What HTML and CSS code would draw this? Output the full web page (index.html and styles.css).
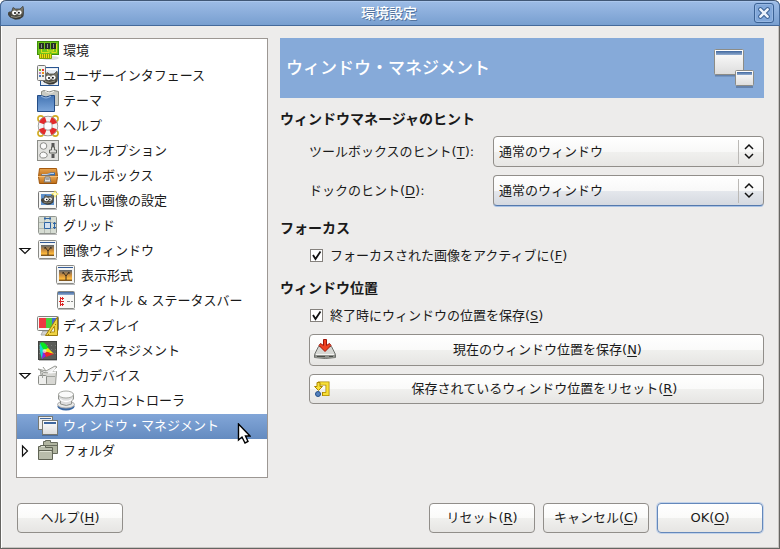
FILE: index.html
```html
<!DOCTYPE html>
<html lang="ja">
<head>
<meta charset="utf-8">
<meta name="viewport" content="width=device-width, initial-scale=1">
<title>環境設定</title>
<link rel="stylesheet" href="styles.css">
</head>
<body>
<svg class="defs" aria-hidden="true">
  <defs>
    <linearGradient id="paper" x1="0" y1="0" x2="0" y2="1"><stop offset="0" stop-color="#fff"/><stop offset="1" stop-color="#dcdcdc"/></linearGradient>
    <linearGradient id="blue" x1="0" y1="0" x2="0" y2="1"><stop offset="0" stop-color="#4475b4"/><stop offset="1" stop-color="#7ca6da"/></linearGradient>
    <linearGradient id="bar" x1="0" y1="0" x2="0" y2="1"><stop offset="0" stop-color="#3e669e"/><stop offset="1" stop-color="#93add0"/></linearGradient>
    <linearGradient id="dusk" x1="0" y1="0" x2="0" y2="1"><stop offset="0" stop-color="#5d666f"/><stop offset=".45" stop-color="#c98b3e"/><stop offset=".8" stop-color="#fdb93c"/><stop offset="1" stop-color="#5d3b17"/></linearGradient>
    <linearGradient id="wood" x1="0" y1="0" x2="0" y2="1"><stop offset="0" stop-color="#e8a552"/><stop offset="1" stop-color="#bd6c15"/></linearGradient>
    <linearGradient id="fur" x1="0" y1="0" x2="0" y2="1"><stop offset="0" stop-color="#8c8878"/><stop offset="1" stop-color="#35342f"/></linearGradient>
    <symbol id="wilber" viewBox="0 0 16 14">
      <path d="M4 4.500 5 1.500 7.500 3 12 3 15 .3 15.800 5 15 10.500Q12 13.700 7 13.200L2 11 0 8 1 6 3 6Z" fill="url(#fur)" stroke="#34332f" stroke-width=".7"/>
      <ellipse cx="6.500" cy="6.800" rx="2.500" ry="2.400" fill="#fff"/><ellipse cx="11.300" cy="6.500" rx="2.300" ry="2.200" fill="#fff"/>
      <circle cx="7" cy="7" r="1" fill="#111"/><circle cx="10.900" cy="6.800" r="1" fill="#111"/>
      <ellipse cx="1.800" cy="8" rx="1.600" ry="1.800" fill="#45433e"/><path d="M3 10.500q5 2 10-.5" fill="none" stroke="#b8b4a0" stroke-width=".7"/>
    </symbol>
    <symbol id="picture" viewBox="0 0 22 22">
      <path d="M2 19.500h18" stroke="#bbb"/><rect x="1.500" y=".5" width="18" height="18" rx="1" fill="#f5f5f3" stroke="#8a8a86"/>
      <rect x="3" y="2" width="15" height="1" fill="#345b96"/><rect x="4" y="5" width="13" height="11" fill="url(#dusk)"/>
      <path d="M11 15v-4L8 7M11 11l3-4M9 8H7M13 8h2" fill="none" stroke="#3a2f20"/>
    </symbol>
  </defs>
</svg>
<div class="window">
  <header class="titlebar">
    <svg class="app-icon" viewBox="0 0 16 14" aria-hidden="true"><use href="#wilber"/></svg>
    <h1 class="title">環境設定</h1>
    <button class="close" type="button" aria-label="閉じる"><svg viewBox="0 0 20 20" aria-hidden="true"><path d="m6 6 8 8M14 6l-8 8" stroke="#3c6294" stroke-width="5" stroke-linecap="round"/><path d="m6 6 8 8M14 6l-8 8" stroke="#eef4fc" stroke-width="2.800" stroke-linecap="round"/></svg></button>
  </header>

  <main class="content">
    <ul class="tree" role="tree" aria-label="カテゴリ">
      <li class="row" role="treeitem">
        <svg class="icon" viewBox="0 0 22 22"><ellipse cx="13" cy="18" rx="9" ry="2" fill="#ddd"/><rect x=".5" y="1.500" width="21" height="13" fill="#70c51b" stroke="#3f9009"/><path d="M2.500 14v4.500h12V14" fill="#e8e40c" stroke="#7ba10a"/><path d="M4.500 14v4m2-4v4m2-4v4m2-4v4m2-4v4" stroke="#97930b"/><path d="M4.500 9v3.500h8M10.500 9v2h6V9m3-5v8.500h-5" fill="none" stroke="#dfe118"/><path d="M2 3h5v6H2zM8 3h5v6H8zM14 3h5v6h-5z" fill="#263122"/><path d="M4 4h1v4H4zm6 0h1v4h-1zm6 0h1v4h-1z" fill="#8d8b8e"/></svg>
        <span>環境</span></li>
      <li class="row" role="treeitem">
        <svg class="icon" viewBox="0 0 22 22"><rect x="3.500" y="2.500" width="18" height="18" fill="#e8edf3" stroke="#285591"/><path d="M5 4h15v1H5z" fill="#fff"/><use href="#wilber" x="5" y="6" width="16" height="14"/><rect x=".5" y=".5" width="8" height="15" rx="1" fill="#f2f2f0" stroke="#777"/><path d="M2 4h2v2H2z" fill="#73b91d"/><path d="M5 4h2v2H5z" fill="#e33"/><path d="M2 7h2v2H2z" fill="#bc86bd"/><path d="M5 7h2v2H5z" fill="#ef921c"/><path d="M2 10h2v2H2z" fill="#4a78bd"/><path d="M5 10h2v2H5z" fill="#7a7a70"/></svg>
        <span>ユーザーインタフェース</span></li>
      <li class="row" role="treeitem">
        <svg class="icon" viewBox="0 0 22 22"><path d="M4.500 1.500 7 .5q5 3 10 0l4.500 1v14h-17z" fill="#c9cbc4" stroke="#8a8d84"/><path d="M8 1q5 4 9 0" fill="none" stroke="#f5f5f1"/><path d="M.5 5.500H4q5 3 10 0h3.500v16H.5z" fill="url(#blue)" stroke="#244d86"/><path d="M4 6q5 4 10 0" fill="none" stroke="#9bbbe3"/></svg>
        <span>テーマ</span></li>
      <li class="row" role="treeitem">
        <svg class="icon" viewBox="0 0 22 22"><g fill="none" stroke="#d2ac22" stroke-width="1.600"><circle cx="3.700" cy="3.700" r="2.800"/><circle cx="18.300" cy="3.700" r="2.800"/><circle cx="3.700" cy="18.300" r="2.800"/><circle cx="18.300" cy="18.300" r="2.800"/></g><circle cx="11" cy="11" r="7" fill="none" stroke="#8b8b87" stroke-width="6.500"/><circle cx="11" cy="11" r="7" fill="none" stroke="#f5f5f5" stroke-width="5"/><circle cx="11" cy="11" r="7" fill="none" stroke="#e22c2c" stroke-width="5" stroke-dasharray="6 5" stroke-dashoffset="-2.500"/></svg>
        <span>ヘルプ</span></li>
      <li class="row" role="treeitem">
        <svg class="icon" viewBox="0 0 22 22"><rect x=".5" y=".5" width="21" height="20" fill="#e2e2df" stroke="#8b8d88"/><circle cx="6.500" cy="6" r="3.300" fill="#fafafa" stroke="#8b8b88"/><path d="M3 14q3-4 7 0 1 4-4 4-4 0-3-4Z" fill="#fafafa" stroke="#8b8b88"/><path d="M14.500 3h3v4h-3zM14.500 14h3v4h-3z" fill="#555"/><path d="M14.500 7h3v3h2v3h-7v-3h2z" fill="#dededb" stroke="#62645f"/></svg>
        <span>ツールオプション</span></li>
      <li class="row" role="treeitem">
        <svg class="icon" viewBox="0 0 22 22"><path d="M2.500 3.500h17l1 8h-19z" fill="url(#wood)" stroke="#a55a0e"/><path d="M4 10.500q0-2 3-1l5-1 1-1h5v3z" fill="#3771b7"/><path d="M5 9.500h5l4-1h3" fill="none" stroke="#b9cde5"/><path d="M1.500 11.500h19l-1 7h-17z" fill="url(#wood)" stroke="#9c540b"/><path d="M1 11.500h20" stroke="#f7c077"/><path d="M8 14v-2h5v2l1 3H7z" fill="#e5e5e2" stroke="#777"/><path d="M9 14h3" stroke="#666"/></svg>
        <span>ツールボックス</span></li>
      <li class="row" role="treeitem">
        <svg class="icon" viewBox="0 0 22 22"><path d="M2 19.500h18" stroke="#bbb"/><rect x="1.500" y="1.500" width="18" height="17" rx="1" fill="#f7f7f5" stroke="#777"/><path d="M4 4h13v11H4z" fill="#5e91cc"/><use href="#wilber" x="4" y="4" width="13" height="11"/><path d="m18 0 1.200 2.700L22 4l-2.800 1.200L18 8l-1.200-2.800L14 4l2.800-1.300z" fill="#f5e13f"/><circle cx="18" cy="4" r="1.700" fill="#fffbd0"/></svg>
        <span>新しい画像の設定</span></li>
      <li class="row" role="treeitem">
        <svg class="icon" viewBox="0 0 22 22"><path d="M2 19.500h18" stroke="#bbb"/><rect x="1.500" y="1.500" width="18" height="17" rx="1" fill="#d7ddd4" stroke="#929690"/><path d="M7.500 2v16m6-16v16M2 7.500h17M2 13.500h17" stroke="#b2b8b0"/><path d="M7.500 7.500h6v6h-6z" fill="#d3e0ef" stroke="#2e65a5"/><path d="M7 3.500h7M17.500 7v7M8 2v3m5-3v3M16 8.500h3M16 12.500h3" stroke="#2e65a5"/></svg>
        <span>グリッド</span></li>
      <li class="row" role="treeitem" aria-expanded="true">
        <button class="expander" type="button" aria-label="画像ウィンドウを折りたたむ"><svg viewBox="0 0 16 16"><path d="M3 5.500h10L8 10.500z" fill="#fff" stroke="#111" stroke-width="1.200"/></svg></button>
        <svg class="icon"><use href="#picture"/></svg>
        <span>画像ウィンドウ</span></li>
      <li class="row child" role="treeitem" aria-level="2">
        <svg class="icon"><use href="#picture"/></svg>
        <span>表示形式</span></li>
      <li class="row child" role="treeitem" aria-level="2">
        <svg class="icon" viewBox="0 0 22 22"><path d="M3 19.500h17" stroke="#bbb"/><rect x="2.500" y="1.500" width="17" height="17" rx="1" fill="#f8f8f6" stroke="#858783"/><path d="M3 2h16v3H3z" fill="url(#bar)"/><path d="M5.500 7v9M5 8.500h4m-4 6h4M4 11.500h5M7.500 7v3m0 3v3" stroke="#d92424"/><path d="M12 11.500h3m1 0h2" stroke="#888"/></svg>
        <span>タイトル &amp; ステータスバー</span></li>
      <li class="row" role="treeitem">
        <svg class="icon" viewBox="0 0 22 22"><path d="M6 16h9l1 4H4z" fill="#d5d5d2" stroke="#aaa"/><rect x=".5" y="1.500" width="21" height="14" rx="1" fill="#f6f6f4" stroke="#81837f"/><path d="M2 3h7v10H2z" fill="#ed3942"/><path d="M9 3h6v10H9z" fill="#48d13d"/><path d="M15 3h5v10h-5z" fill="#436cd0"/><path d="M20.500 2v18.500h-12z" fill="#eed343" stroke="#9b7b0b"/><path d="M17.500 11v6h-4z" fill="#eaf0e3" stroke="#b49117"/><path d="m11 19 1 1m1-3 1 1m2-6 1 1m1-4 1 1" stroke="#9b7b0b"/></svg>
        <span>ディスプレイ</span></li>
      <li class="row" role="treeitem">
        <svg class="icon" viewBox="0 0 22 22"><path d="M2 20.500h18" stroke="#bbb"/><rect x="1.500" y="1.500" width="18" height="18" fill="#5b5d59" stroke="#414340"/><path d="M2 5.500h17M2 9.500h17M2 13.500h17" stroke="#7b7e78" stroke-dasharray="1 3"/><path d="M3 3q5-3 9 7L6 11z" fill="#08e821"/><path d="M3 3 7 11l-2 8Q2 11 3 3z" fill="#13d8cf"/><path d="m11 8 6 6-11-3z" fill="#f6e212"/><path d="m17 14-8 3-3-6z" fill="#f02628"/><path d="m9 16-4 3 1-8z" fill="#8a24e5"/><circle cx="7.500" cy="11" r="2" fill="#f4efed" opacity=".7"/></svg>
        <span>カラーマネジメント</span></li>
      <li class="row" role="treeitem" aria-expanded="true">
        <button class="expander" type="button" aria-label="入力デバイスを折りたたむ"><svg viewBox="0 0 16 16"><path d="M3 5.500h10L8 10.500z" fill="#fff" stroke="#111" stroke-width="1.200"/></svg></button>
        <svg class="icon" viewBox="0 0 22 22"><path d="M3.500 6.500h16l-1 13h-13z" fill="#d8d8d4" stroke="#979993"/><path d="m1 4 8 2 9-5 2 1-7 6q-6 1-12-4zM6 2l3 4" fill="#eee" stroke="#979993"/><path d="m13 8 5-5M11 8l8-1" stroke="#fafafa" stroke-width="1.500"/><rect x="1.500" y="10.500" width="8" height="9" rx="1" fill="#eeeeec" stroke="#8a8c87"/><path d="M5.500 13V8M10 11.500h8" stroke="#a1a39e"/></svg>
        <span>入力デバイス</span></li>
      <li class="row child" role="treeitem" aria-level="2">
        <svg class="icon" viewBox="0 0 22 22"><ellipse cx="11" cy="16.500" rx="8.500" ry="4" fill="#3766a4"/><ellipse cx="11" cy="14.500" rx="8.500" ry="3.500" fill="#e8e8e6" stroke="#aaa"/><path d="M3.500 4v5l2 2v3q6 3 11 0v-3l2-2V4z" fill="#ddd" stroke="#92948f"/><ellipse cx="11" cy="4.500" rx="7.500" ry="3.500" fill="#fafafa" stroke="#a7a9a4"/><path d="M5 9.500q6 4 12 0" fill="none" stroke="#fff" stroke-width="1.500"/></svg>
        <span>入力コントローラ</span></li>
      <li class="row selected" role="treeitem" aria-selected="true">
        <svg class="icon" viewBox="0 0 22 22"><path d="M5 20.500h16" stroke="#4b6c9c"/><rect x="1.500" y="1.500" width="14" height="13" fill="#eee" stroke="#777973"/><path d="M3 3.500h11" stroke="#3e669e"/><rect x="5.500" y="5.500" width="15" height="14" fill="url(#paper)" stroke="#777973"/><path d="M7 8h12" stroke="#3e669e" stroke-width="2"/></svg>
        <span>ウィンドウ・マネジメント</span>
        <svg class="pointer" viewBox="0 0 14 21" aria-hidden="true"><path d="M1.500 1v16l3.500-3 3 6 3-1.500-2.500-5.500H13z" fill="#fff" stroke="#000" stroke-width="1.400"/></svg></li>
      <li class="row" role="treeitem" aria-expanded="false">
        <button class="expander" type="button" aria-label="フォルダを展開"><svg viewBox="0 0 16 16"><path d="M5.500 3v10l5-5z" fill="#fff" stroke="#111" stroke-width="1.200"/></svg></button>
        <svg class="icon" viewBox="0 0 22 22"><path d="M6.500 13.500v-12h2v-1h5v2h7v11z" fill="#b1b5a0" stroke="#696d5e"/><path d="M7 5.500h13" stroke="#696d5e"/><path d="M1.500 19.500v-13h2v-1h5v2h7v12z" fill="#b9bdab" stroke="#606455"/><path d="M2 10.500h13" stroke="#606455"/><path d="M3 11.500h11M4 6.500h4" stroke="#dfe2d3"/></svg>
        <span>フォルダ</span></li>
    </ul>

    <section class="panel">
      <div class="banner">
        <h2>ウィンドウ・マネジメント</h2>
        <svg viewBox="0 0 42 40" aria-hidden="true"><path d="M1 27.500h29M22 39h17" stroke="#6482ac" stroke-width="2"/><rect x=".5" y="1.500" width="29" height="25" rx="1" fill="url(#paper)" stroke="#8c8c87"/><rect x="2" y="3" width="26" height="4" fill="url(#bar)"/><rect x="21.500" y="22.500" width="18" height="15" rx="1" fill="url(#paper)" stroke="#8c8c87"/><rect x="23" y="24" width="15" height="3" fill="url(#bar)"/></svg>
      </div>

      <div class="group">
        <h3>ウィンドウマネージャのヒント</h3>
        <div class="field">
          <label for="toolbox-hint">ツールボックスのヒント(<u>T</u>):</label>
          <span class="combo"><select id="toolbox-hint"><option>通常のウィンドウ</option></select><svg viewBox="0 0 24 31" aria-hidden="true"><path d="M.5 4v24" stroke="#bbb9b6"/><path d="m7 13 4-4 4 4M7 18l4 4 4-4" fill="none" stroke="#111" stroke-width="1.500"/></svg></span>
        </div>
        <div class="field">
          <label for="dock-hint">ドックのヒント(<u>D</u>):</label>
          <span class="combo hover"><select id="dock-hint"><option>通常のウィンドウ</option></select><svg viewBox="0 0 24 31" aria-hidden="true"><path d="M.5 4v24" stroke="#bbb9b6"/><path d="m7 13 4-4 4 4M7 18l4 4 4-4" fill="none" stroke="#111" stroke-width="1.500"/></svg></span>
        </div>
      </div>

      <div class="group">
        <h3>フォーカス</h3>
        <label class="check"><span class="tick"><input type="checkbox" checked><svg viewBox="0 0 13 13" aria-hidden="true"><path d="m3 6 2.500 4L10.500 2.500" fill="none" stroke="#111" stroke-width="1.800"/></svg></span><span>フォーカスされた画像をアクティブに(<u>F</u>)</span></label>
      </div>

      <div class="group">
        <h3>ウィンドウ位置</h3>
        <label class="check"><span class="tick"><input type="checkbox" checked><svg viewBox="0 0 13 13" aria-hidden="true"><path d="m3 6 2.500 4L10.500 2.500" fill="none" stroke="#111" stroke-width="1.800"/></svg></span><span>終了時にウィンドウの位置を保存(<u>S</u>)</span></label>
        <button class="button wide tall" type="button"><svg class="icon" viewBox="0 0 22 22"><path d="M4.500 7.500h13l4 8v3q-10 2-21 0v-3z" fill="#d6d7d3" stroke="#6d6f6a"/><path d="M1 15.500h20v3q-10 1-20 0z" fill="#8f918c"/><path d="M2 15.500h18" stroke="#f3f3f1"/><path d="M3 17.500h8m4 0h4" stroke="#4a4d47"/><path d="M9.500 .5h3v6l3-2 1.500 2-6 6-6-6L6.500 4.500l3 2z" fill="#ef4221" stroke="#9d1509"/></svg><span>現在のウィンドウ位置を保存(<u>N</u>)</span></button>
        <button class="button wide" type="button"><svg class="icon small" viewBox="0 0 16 16"><path d="M4 2.500h9.500v10.500H8" fill="none" stroke="#ad8800" stroke-width="4"/><path d="M4 2.500h9.500v10.500H9" fill="none" stroke="#f8df38" stroke-width="2.400"/><path d="M3 1.500h3v4h2.500L4.500 9.500 .5 5.500H3z" fill="#f8df38" stroke="#ad8800"/><circle cx="4" cy="13" r="2.500" fill="#5482be" stroke="#254f88"/></svg><span>保存されているウィンドウ位置をリセット(<u>R</u>)</span></button>
      </div>
    </section>
  </main>

  <footer class="actions">
    <button class="button help" type="button">ヘルプ(<u>H</u>)</button>
    <button class="button" type="button">リセット(<u>R</u>)</button>
    <button class="button" type="button">キャンセル(<u>C</u>)</button>
    <button class="button default" type="button">OK(<u>O</u>)</button>
  </footer>
</div>
</body>
</html>
```
FILE: styles.css
```css
* { box-sizing: border-box; }

body {
  margin: 0;
  background: #fff;
  color: #1a1a1a;
  font: 13px/18px "DejaVu Sans", "Noto Sans CJK JP", sans-serif;
}

button, select, input { font: inherit; color: inherit; margin: 0; }
h1, h2, h3, ul { margin: 0; padding: 0; }
svg { display: block; }
u { text-underline-offset: 2px; text-decoration-thickness: 1px; }
.defs { position: absolute; width: 0; height: 0; }

.window {
  display: flex;
  flex-direction: column;
  min-height: 100vh;
  background: #edeceb;
  border: 1px solid #666562;
  border-top: 0;
  border-radius: 6px 6px 0 0;
  box-shadow: inset 1px 0 #fff, inset -1px -1px #c8c5c2;
}

.titlebar {
  display: flex;
  align-items: center;
  height: 26px;
  margin: 0 -1px;
  padding: 0 5px 0 7px;
  background: linear-gradient(#9dbce6, #789fd0);
  border: 1px solid #456a9b;
  border-top-color: #405776;
  border-radius: 6px 6px 0 0;
  box-shadow: inset 0 1px #abc7ed;
}
.app-icon { width: 16px; height: 14px; }
.title {
  flex: 1;
  text-align: center;
  color: #fff;
  font-size: 14px;
  font-weight: 500;
  text-shadow: 1px 1px #54749e;
}
.close {
  width: 20px;
  height: 20px;
  padding: 0;
  background: #82a8da;
  border: 1px solid #3b6295;
  border-radius: 3px;
  box-shadow: inset 0 0 0 1px #96b7e2;
}
.close svg { width: 18px; height: 18px; }

.content {
  display: flex;
  flex: 1;
  gap: 12px;
  padding: 12px 15px 0;
}

.tree {
  flex: 0 0 252px;
  list-style: none;
  background: #fff;
  border: 1px solid #9c9793;
}
.row {
  position: relative;
  display: grid;
  grid-template-columns: 16px 22px 1fr;
  column-gap: 4px;
  align-items: center;
  height: 25px;
  padding-bottom: 1px;
  white-space: nowrap;
}
.row > .icon { grid-column: 2; }
.row.child { padding-left: 18px; }
.row.selected {
  color: #fff;
  background: linear-gradient(#82a6d8, #648bc0);
}
.icon { width: 22px; height: 22px; }
.expander {
  width: 16px;
  height: 16px;
  padding: 0;
  background: none;
  border: 0;
}
.pointer {
  position: absolute;
  top: 9px;
  right: 16px;
  z-index: 1;
  width: 14px;
  height: 21px;
}

.panel { flex: 1; min-width: 0; }
.banner {
  display: flex;
  align-items: center;
  justify-content: space-between;
  height: 60px;
  margin-bottom: 12px;
  padding: 0 8px 0 6px;
  background: #86aad9;
  color: #fff;
}
.banner h2 { font-size: 17px; line-height: 24px; font-weight: 500; }
.banner svg { width: 42px; height: 40px; }

.group {
  display: flex;
  flex-direction: column;
  gap: 8px;
  margin-bottom: 13px;
}
.group h3 { font-size: 14px; line-height: 18px; font-weight: 700; }
.field {
  display: grid;
  grid-template-columns: 176px 1fr;
  column-gap: 8px;
  align-items: center;
  padding-left: 29px;
}
.combo { position: relative; }
.combo select {
  display: block;
  appearance: none;
  width: 100%;
  height: 31px;
  padding: 0 30px 0 5px;
  background: linear-gradient(#fff, #f8f8f7 52%, #f0f0ee 53%, #e7e6e4);
  border: 1px solid #918e8a;
  border-radius: 4px;
}
.combo.hover select {
  background: linear-gradient(#fff, #f8f8f8 52%, #e4e7ec 53%, #d5d9e0);
  border-bottom-color: #5479ad;
  box-shadow: 0 1px #a9c2e4;
}
.combo svg {
  position: absolute;
  top: 0;
  right: 2px;
  width: 24px;
  height: 31px;
  pointer-events: none;
}

.check {
  display: flex;
  align-items: center;
  gap: 7px;
  height: 21px;
  padding-left: 30px;
}
.tick { position: relative; width: 13px; height: 13px; }
.tick input {
  display: block;
  appearance: none;
  width: 13px;
  height: 13px;
  background: #fff;
  border: 1px solid #85817d;
}
.tick svg { position: absolute; inset: 0; pointer-events: none; }

.button {
  display: flex;
  align-items: center;
  justify-content: center;
  min-width: 106px;
  height: 30px;
  padding: 0 6px;
  background: linear-gradient(#fff, #fafaf9 50%, #f0f0ee 51%, #e6e5e3);
  border: 1px solid #918e8a;
  border-radius: 4px;
  white-space: nowrap;
}
.button.wide { margin-left: 29px; padding: 0 4px; }
.button.wide span { flex: 1; text-align: center; }
.button.tall { height: 32px; }
.icon.small { width: 16px; height: 16px; }
.button.default { border-color: #6488bb; box-shadow: 0 0 0 1px #c2d2e9; }

.actions {
  display: flex;
  gap: 8px;
  padding: 25px 16px 15px;
}
.help { margin-right: auto; }
```
